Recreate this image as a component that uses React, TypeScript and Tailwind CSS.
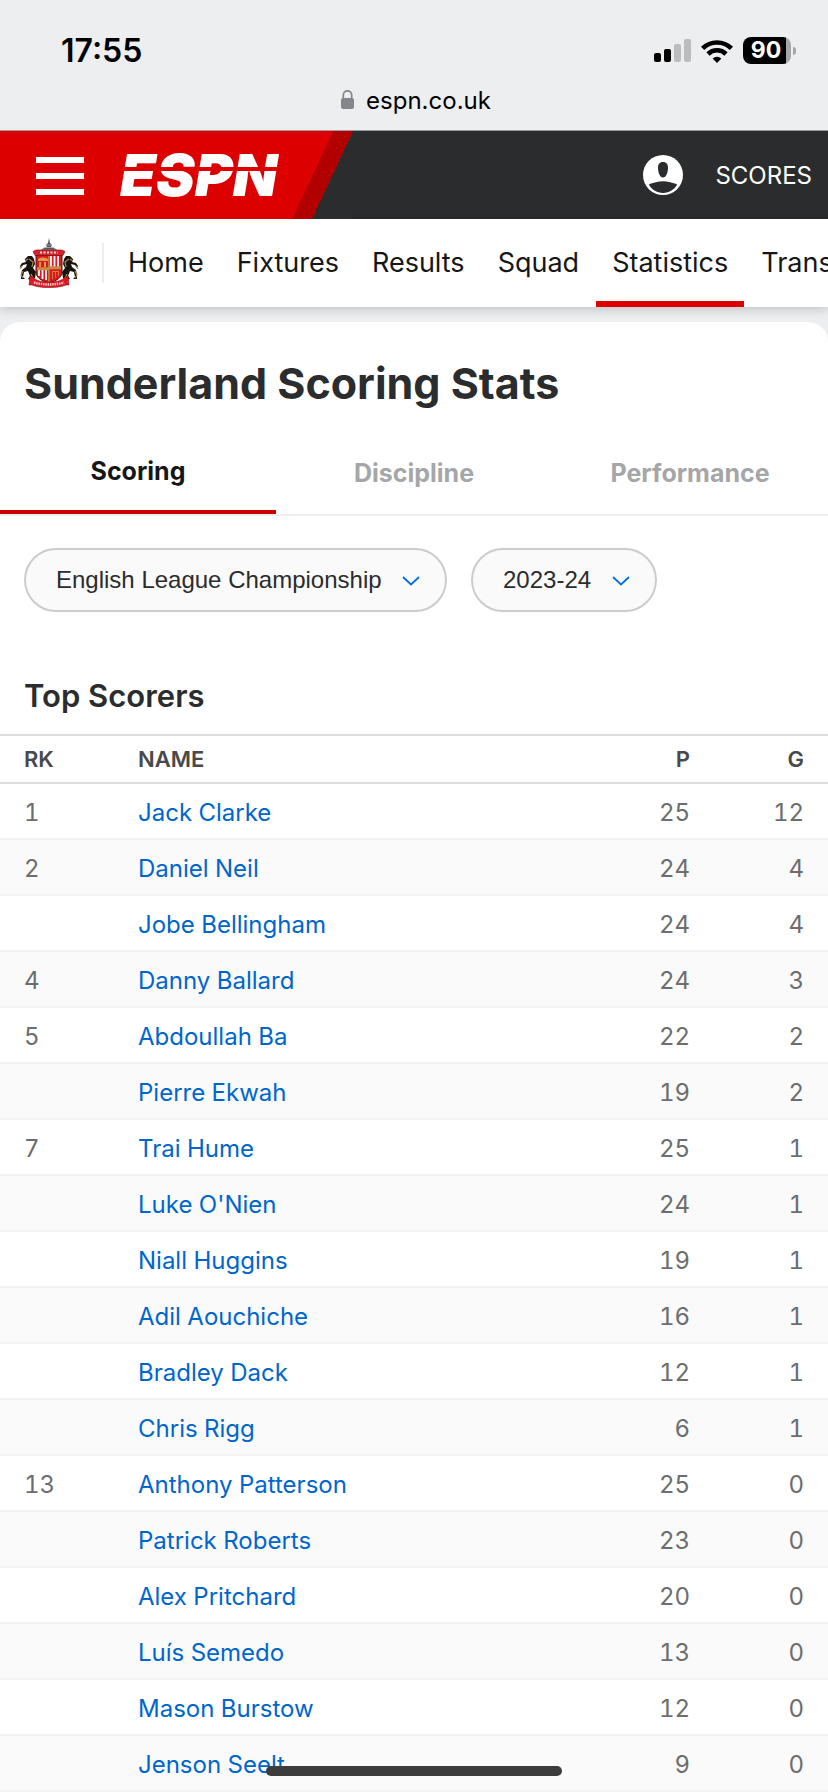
import React, { useState } from 'react';

interface Scorer {
  rank?: number;
  name: string;
  played: number;
  goals: number;
}

const SCORERS: Scorer[] = [
  { rank: 1, name: 'Jack Clarke', played: 25, goals: 12 },
  { rank: 2, name: 'Daniel Neil', played: 24, goals: 4 },
  { name: 'Jobe Bellingham', played: 24, goals: 4 },
  { rank: 4, name: 'Danny Ballard', played: 24, goals: 3 },
  { rank: 5, name: 'Abdoullah Ba', played: 22, goals: 2 },
  { name: 'Pierre Ekwah', played: 19, goals: 2 },
  { rank: 7, name: 'Trai Hume', played: 25, goals: 1 },
  { name: "Luke O'Nien", played: 24, goals: 1 },
  { name: 'Niall Huggins', played: 19, goals: 1 },
  { name: 'Adil Aouchiche', played: 16, goals: 1 },
  { name: 'Bradley Dack', played: 12, goals: 1 },
  { name: 'Chris Rigg', played: 6, goals: 1 },
  { rank: 13, name: 'Anthony Patterson', played: 25, goals: 0 },
  { name: 'Patrick Roberts', played: 23, goals: 0 },
  { name: 'Alex Pritchard', played: 20, goals: 0 },
  { name: 'Luís Semedo', played: 13, goals: 0 },
  { name: 'Mason Burstow', played: 12, goals: 0 },
  { name: 'Jenson Seelt', played: 9, goals: 0 },
];

const NAV_LINKS = ['Home', 'Fixtures', 'Results', 'Squad', 'Statistics', 'Transfers'];
const TABS = ['Scoring', 'Discipline', 'Performance'];

const StatusBar: React.FC = () => (
  <div className="border-b border-[#9b9c9e] bg-[#edeef0] text-black">
    <div className="flex h-[86px] items-end justify-between pr-8 pb-[22px] pl-[61px]">
      <span className="text-[32px] leading-[26px] font-semibold">17:55</span>
      <div className="flex items-center gap-[10px]">
        <svg width="37" height="24" viewBox="0 0 37 24">
          <rect x="0" y="14" width="7" height="9" rx="2" />
          <rect x="10" y="10" width="7" height="13" rx="2" />
          <rect x="20" y="5" width="7" height="18" rx="2" fill="#bbbcbe" />
          <rect x="30" y="0" width="7" height="23" rx="2" fill="#bbbcbe" />
        </svg>
        <svg width="32" height="24" viewBox="0 0 32 24" fill="none" stroke="#000" strokeWidth="4.6">
          <path d="M1.6 9.4a20.4 20.4 0 0 1 28.8 0" />
          <path d="M7 15a12.8 12.8 0 0 1 18 0" />
          <path d="M16 24l-4.4-4.4a6.2 6.2 0 0 1 8.8 0z" fill="#000" stroke="none" />
        </svg>
        <div className="flex items-center gap-[2px]">
          <div className="flex h-[27px] w-12 items-center justify-center rounded-lg bg-[linear-gradient(to_right,#000_43px,#a5a6a8_43px)] pr-[2px] text-[23px] leading-[27px] font-bold text-white">
            90
          </div>
          <div className="h-2 w-[3px] rounded-r-full bg-[#a5a6a8]" />
        </div>
      </div>
    </div>
    <div className="flex h-11 items-start justify-center pl-1">
      <svg width="13" height="19" viewBox="0 0 13 19" className="mt-1 mr-3" fill="#85868b">
        <path d="M2.3 9V5.2a4.2 4.4 0 0 1 8.4 0V9" fill="none" stroke="#85868b" strokeWidth="1.7" />
        <rect x="0" y="8" width="13" height="11" rx="2" />
      </svg>
      <span className="text-[24px] leading-[30px]">espn.co.uk</span>
    </div>
  </div>
);

const EspnLogo: React.FC = () => (
  <svg width="170" height="42" viewBox="0 0 170 42" role="img" aria-label="ESPN" className="overflow-visible">
    <text x="0" y="42" fill="#fff" className="text-[58px] font-black italic">
      ESPN
    </text>
    <rect x="0" y="13" width="170" height="4" fill="#d00" />
  </svg>
);

const Header: React.FC = () => (
  <header className="flex h-[88px] items-center justify-between bg-[#2b2c2d] pr-4">
    <div className="flex h-full w-[353px] bg-[linear-gradient(115deg,#d00_302px,#b20000_302px,#b20000_320px,#2b2c2d_320px)]">
      <div className="flex h-full items-center gap-9 pl-9">
        <button type="button" aria-label="Menu" className="flex w-12 shrink-0 flex-col gap-[10px] pt-px">
          <span className="h-[6px] bg-white" />
          <span className="h-[6px] bg-white" />
          <span className="h-[6px] bg-white" />
        </button>
        <a href="#home">
          <EspnLogo />
        </a>
      </div>
    </div>
    <div className="flex items-center gap-8">
      <button type="button" aria-label="Account">
        <svg width="40" height="40" viewBox="0 0 40 40">
          <circle cx="20" cy="20" r="20" fill="#fff" />
          <path d="M20 7c3.6 0 5.2 2.5 5 6.200-.2 4.600-1.800 9.300-5 9.300s-4.800-4.700-5-9.300C14.800 9.500 16.400 7 20 7z" fill="#2b2c2d" />
          <path d="M5.800 29.600C10 27.600 15.500 26.300 20 26.300s10 1.300 14.200 3.300C31.500 34.500 26.500 38 20 38S8.500 34.500 5.800 29.600z" fill="#2b2c2d" />
        </svg>
      </button>
      <a href="#scores" className="pt-px text-[24px] leading-[30px] text-white">SCORES</a>
    </div>
  </header>
);

const Lion: React.FC = () => (
  <>
    <path d="M6 21l3-3 4 0 2 3 1 5-2 4 3 4-1 6-4 2-3-1 2-3-2-5-4 1-1 5 2 2-4 0 0-4 1-5 4-3 1-3-4 1-2 3-1-2 2-3 4-1-1-2z" fill="#17130f" />
    <path d="M1 31l2-3M4 40l-2-3 2-4M10 21l4 3-1 5M12 36l2 4M6 23l3-2" stroke="#a98a4c" strokeWidth="1.2" fill="none" />
  </>
);

const Crest: React.FC = () => (
  <svg width="60" height="50" viewBox="0 0 60 50" role="img" aria-label="Sunderland AFC">
    {/* wheel and finial */}
    <path d="M30 0l1 5 2 2-1 2 5 2 3 4H20l3-4 5-2-1-2 2-2z" fill="#56525a" />
    <path d="M22 12h16M25 9.5h10M27 7h6" stroke="#b5b2b8" strokeWidth=".8" />
    <Lion />
    <g transform="matrix(-1 0 0 1 60 0)">
      <Lion />
    </g>
    {/* shield */}
    <path d="M17 17h26v17c0 6-6 9-13 11-7-2-13-5-13-11z" fill="#e4141f" stroke="#3a2718" strokeWidth="1" />
    <path d="M14 13.5l3-1.500h26l3 1.500-2 4H16z" fill="#d9202b" stroke="#6e1218" strokeWidth=".6" />
    <path d="M21 14.5h18" stroke="#e9d9d9" strokeWidth="2" strokeDasharray="2 1.5" />
    <path d="M32 18v11M35.5 18v11M39 18v11M20 30v8M23.5 30v11M27 30v12" stroke="#fff" strokeWidth="1.8" />
    <path d="M19 21c3-2 7-2 10 0v2H19zM20 24h2v5h-2zM25 24h2v5h-2z" fill="#d79c50" />
    <path d="M18 29.2h12v-1h12v3H30v1H18zM29.2 18h1.4v26h-1.4z" fill="#c08f45" />
    <path d="M33 33h7v1h-7zM33 34h1v7h-1zM36 34h1v6h-1zM39 34h1v4h-1z" fill="#c9803f" />
    {/* ribbon */}
    <path d="M11 38l3 1c3 4 9 5 16 5s13-1 16-5l3-1 1 9-3 0c-5 2-10 2.500-17 2.500S18 49 13 47l-3 0z" fill="#db1a26" stroke="#8d1119" strokeWidth=".6" />
    <path d="M15 44.500q15 4 30 0" stroke="#fff" strokeWidth="2.4" strokeDasharray="1.4 .9" fill="none" opacity=".8" />
  </svg>
);

const TeamNav: React.FC = () => (
  <nav className="flex h-[88px] items-center overflow-hidden bg-white pl-[19px]">
    <a href="#club" className="shrink-0">
      <Crest />
    </a>
    <div className="mr-2 ml-[23px] h-10 w-[2px] shrink-0 bg-[#edeef0]" />
    <ul className="flex h-full gap-px">
      {NAV_LINKS.map(link => (
        <li key={link} className="h-full">
          <a
            href={`#${link.toLowerCase()}`}
            className={`flex h-full items-center border-y-[6px] border-t-transparent px-4 text-[27px] text-[#151617] ${link === 'Statistics' ? 'border-b-[#d00]' : 'border-b-transparent'}`}
          >
            {link}
          </a>
        </li>
      ))}
    </ul>
  </nav>
);

interface PillSelectProps {
  label: string;
  options: string[];
}

const PillSelect: React.FC<PillSelectProps> = ({ label, options }) => (
  <div className="relative">
    <select
      aria-label={label}
      className="h-16 appearance-none rounded-full border-2 border-[#cbccce] bg-[#fafafa] pr-[63px] pl-[30px] font-['Liberation_Sans',Arial,sans-serif] text-[24px] text-[#2b2c2d]"
    >
      {options.map(option => (
        <option key={option}>{option}</option>
      ))}
    </select>
    <svg width="18" height="10" viewBox="0 0 18 10" fill="none" className="pointer-events-none absolute top-7 right-[27px]">
      <path d="M1 1l8 7.5L17 1" stroke="#0070e0" strokeWidth="1.8" />
    </svg>
  </div>
);

const ScorersTable: React.FC = () => (
  <table className="w-full table-fixed border-separate border-spacing-0 text-[24px] leading-[30px] tabular-nums">
    <thead>
      <tr className="text-[22px] text-[#48494a] [&>th]:h-[50px] [&>th]:border-y-2 [&>th]:border-[#dcdddf] [&>th]:py-0 [&>th]:font-semibold">
        <th scope="col" className="w-[138px] pl-6 text-left">RK</th>
        <th scope="col" className="text-left">NAME</th>
        <th scope="col" className="w-[114px] pr-6 text-right">P</th>
        <th scope="col" className="w-[114px] pr-6 text-right">G</th>
      </tr>
    </thead>
    <tbody>
      {SCORERS.map(({ rank, name, played, goals }) => (
        <tr key={name} className="text-[#6c6d6f] even:bg-[#fafafa] [&>td]:h-14 [&>td]:border-b-2 [&>td]:border-[#f1f2f3] [&>td]:pt-1">
          <td className="pl-6">{rank}</td>
          <td>
            <a href="#player" className="text-[#0066cc]">{name}</a>
          </td>
          <td className="pr-6 text-right">{played}</td>
          <td className="pr-6 text-right">{goals}</td>
        </tr>
      ))}
    </tbody>
  </table>
);

const App: React.FC = () => {
  const [activeTab, setActiveTab] = useState('Scoring');

  return (
    <div className="bg-[#edeef0] font-[Inter,sans-serif]">
      <StatusBar />
      <Header />
      <div className="shadow-[0_2px_10px_rgba(0,0,0,0.2)]">
        <TeamNav />
      </div>

      <main className="mt-[15px] rounded-t-[20px] bg-white">
        <h1 className="px-6 pt-8 text-[43px] leading-[58px] font-bold text-[#2b2c2d]">Sunderland Scoring Stats</h1>

        <div role="tablist" className="mt-[30px] flex border-b-2 border-[#edeeef]">
          {TABS.map(tab => (
            <button
              key={tab}
              type="button"
              role="tab"
              aria-selected={activeTab === tab}
              onClick={() => setActiveTab(tab)}
              className={`h-[72px] flex-1 pb-2 text-[25px] font-bold ${activeTab === tab ? 'border-b-4 border-[#c00] text-[#151617]' : 'text-[#a5a6a7]'}`}
            >
              {tab}
            </button>
          ))}
        </div>

        <div className="flex gap-6 px-6 py-8">
          <PillSelect label="League" options={['English League Championship']} />
          <PillSelect label="Season" options={['2023-24']} />
        </div>

        <h2 className="px-6 pt-8 pb-[18px] text-[31px] leading-10 font-semibold text-[#2b2c2d]">Top Scorers</h2>
        <ScorersTable />
      </main>

      <div className="fixed inset-x-0 bottom-4 flex justify-center">
        <div className="h-[10px] w-[296px] rounded-full bg-[#3c3c3c]" />
      </div>
    </div>
  );
};

export default App;
